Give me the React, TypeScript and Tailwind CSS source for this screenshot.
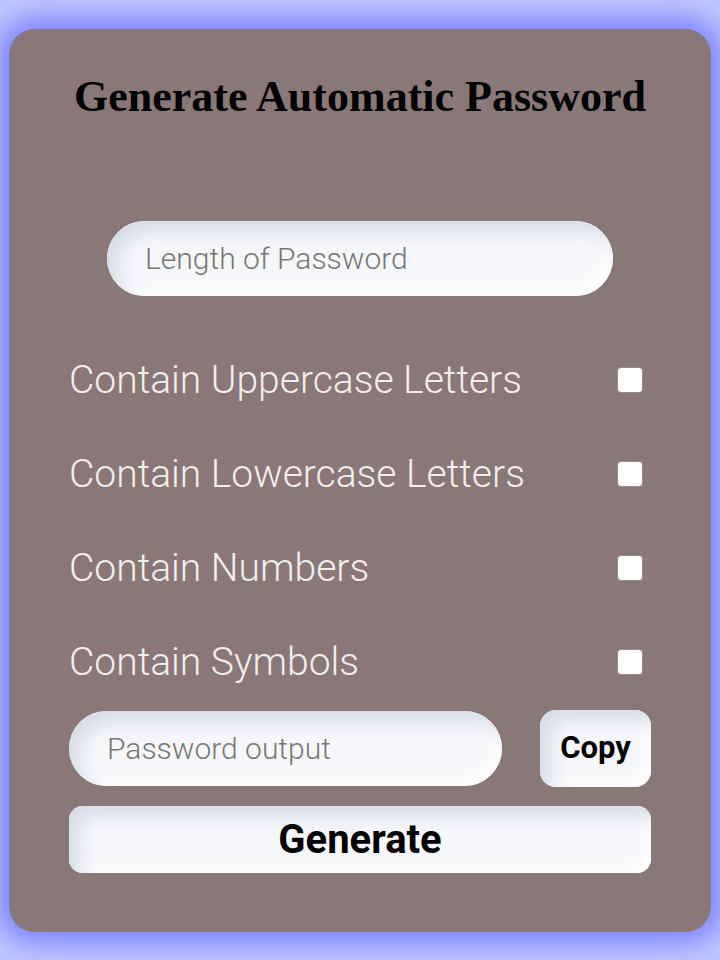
import * as React from "react";

const inset = "bg-[#f6f7fa] shadow-[inset_10px_10px_18px_#d6dce7,inset_-8px_-8px_16px_#ffffff]";

const options: string[] = [
    "Contain Uppercase Letters",
    "Contain Lowercase Letters",
    "Contain Numbers",
    "Contain Symbols",
];

const RenderOption = (props: { label: string }): React.ReactElement => (
    <label className="flex items-center justify-between h-[94px]">
        <span className="text-[39px] font-light text-[#f3eeee]">{props.label}</span>
        <span className="block w-[26px] h-[26px] bg-white rounded-[4px] border border-[#9a8a8a] mr-[8px]" />
    </label>
);

export default function App(): React.ReactElement {
    return (
        <div
            className="min-h-screen bg-[#c2c8ff] px-[9px] pt-[29px] pb-[28px]"
            style={{ fontFamily: "Roboto, 'Liberation Sans', sans-serif" }}
        >
            <div className="h-[903px] bg-[#8a7878] rounded-[26px] shadow-[0_0_28px_12px_#7c84ff] px-[60px] flex flex-col">
                <h1
                    className="text-center text-black font-bold text-[44px] mt-[43px] leading-[50px] whitespace-nowrap"
                    style={{ fontFamily: "'Liberation Serif', serif" }}
                >
                    Generate Automatic Password
                </h1>
                <div className="flex justify-center mt-[99px]">
                    <div className={`w-[506px] h-[75px] rounded-full ${inset} flex items-center pl-[38px]`}>
                        <span className="text-[30px] font-light text-[#777]">Length of Password</span>
                    </div>
                </div>
                <div className="flex flex-col mt-[37px]">
                    {options.map((value: string) => (
                        <RenderOption key={value} label={value} />
                    ))}
                </div>
                <div className="flex items-center justify-between mt-[1px]">
                    <div className={`w-[433px] h-[75px] rounded-full ${inset} flex items-center pl-[38px]`}>
                        <span className="text-[30px] font-light text-[#777]">Password output</span>
                    </div>
                    <div className={`w-[111px] h-[77px] rounded-[16px] ${inset} flex items-center justify-center`}>
                        <span className="text-[31px] font-bold text-black">Copy</span>
                    </div>
                </div>
                <div className={`mt-[19px] h-[67px] rounded-[14px] ${inset} flex items-center justify-center`}>
                    <span className="text-[40px] font-bold text-black">Generate</span>
                </div>
            </div>
        </div>
    );
}
